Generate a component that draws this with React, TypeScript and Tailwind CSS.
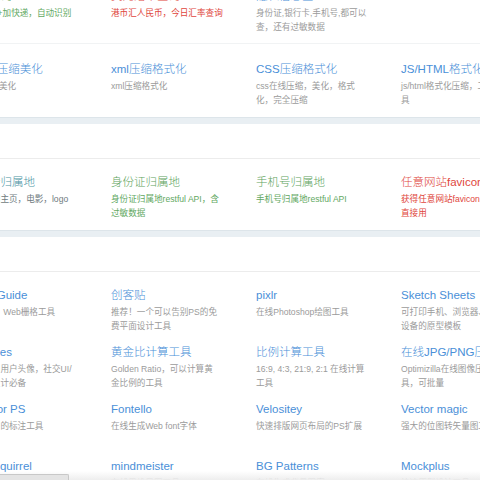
type Tone = "blue" | "green" | "red" | "teal";

type Tool = {
  title: string;
  desc?: string[];
  tone?: Tone;
};

const titleTone: Record<Tone, string> = {
  blue: "text-[#4a8fd8]",
  green: "text-[#5ea45e]",
  red: "text-[#e0463c]",
  teal: "text-[#4a93a3]",
};

const descTone: Record<Tone, string> = {
  blue: "text-[#9b9b9b]",
  green: "text-[#62a862]",
  red: "text-[#e0463c]",
  teal: "text-[#6f7b80]",
};

function ToolItem({ tool, pad }: { tool: Tool; pad: string }) {
  const tone = tool.tone ?? "blue";
  return (
    <div className={`${pad} whitespace-nowrap`}>
      <div className={`text-[11.5px] leading-[16px] font-light ${titleTone[tone]}`}>{tool.title}</div>
      {tool.desc && (
        <div className={`mt-[2px] text-[8.6px] leading-[14px] ${descTone[tone]}`}>
          {tool.desc.map((line) => (
            <div key={line}>{line}</div>
          ))}
        </div>
      )}
    </div>
  );
}

function Row({ tools, pad, border }: { tools: Tool[]; pad: string; border?: boolean }) {
  return (
    <div className={`grid grid-cols-4 ${border ? "border-b border-[#f1f3f4]" : ""}`}>
      {tools.map((t, i) => (
        <ToolItem key={i} tool={t} pad={pad} />
      ))}
    </div>
  );
}

function Band() {
  return <div className="h-[7px] border-t border-[#dde5ea] bg-[#e9eff3]" />;
}

const cardOne: Tool[][] = [
  [
    { title: "快递查询", desc: ["支持100+加快递，自动识别"], tone: "green" },
    { title: "美元港币查询", desc: ["港币汇人民币，今日汇率查询"], tone: "red" },
    { title: "隐私信息查", desc: ["身份证,银行卡,手机号,都可以", "查，还有过敏数据"] },
    { title: "" },
  ],
  [
    { title: "JSON压缩美化", desc: ["json压缩美化"] },
    { title: "xml压缩格式化", desc: ["xml压缩格式化"] },
    { title: "CSS压缩格式化", desc: ["css在线压缩，美化，格式", "化，完全压缩"] },
    { title: "JS/HTML格式化", desc: ["js/html格式化压缩，工", "具"] },
  ],
];

const cardTwo: Tool[] = [
  { title: "银行卡归属地", desc: ["银行官网主页，电影，logo"], tone: "teal" },
  { title: "身份证归属地", desc: ["身份证归属地restful API，含", "过敏数据"], tone: "green" },
  { title: "手机号归属地", desc: ["手机号归属地restful API"], tone: "green" },
  { title: "任意网站favicon", desc: ["获得任意网站favicon，", "直接用"], tone: "red" },
];

const cardThree: Tool[][] = [
  [
    { title: "GuideGuide", desc: ["PS插件，Web栅格工具"] },
    { title: "创客贴", desc: ["推荐！一个可以告别PS的免", "费平面设计工具"] },
    { title: "pixlr", desc: ["在线Photoshop绘图工具"] },
    { title: "Sketch Sheets", desc: ["可打印手机、浏览器、平板", "设备的原型模板"] },
  ],
  [
    { title: "UI Faces", desc: ["免费可用用户头像，社交UI/", "网页UI设计必备"] },
    { title: "黄金比计算工具", desc: ["Golden Ratio，可以计算黄", "金比例的工具"] },
    { title: "比例计算工具", desc: ["16:9, 4:3, 21:9, 2:1 在线计算", "工具"] },
    { title: "在线JPG/PNG压缩", desc: ["Optimizilla在线图像压缩工", "具，可批量"] },
  ],
  [
    { title: "Assistor PS", desc: ["超级好用的标注工具"] },
    { title: "Fontello", desc: ["在线生成Web font字体"] },
    { title: "Velositey", desc: ["快速排版网页布局的PS扩展"] },
    { title: "Vector magic", desc: ["强大的位图转矢量图工具"] },
  ],
  [
    { title: "Font Squirrel", desc: ["免费商用字体下载"] },
    { title: "mindmeister", desc: ["在线思维导图工具"] },
    { title: "BG Patterns", desc: ["在线生成背景图案"] },
    { title: "Mockplus", desc: ["快速原型设计工具"] },
  ],
];

export default function App() {
  return (
    <div
      className="relative h-[480px] w-[480px] overflow-hidden bg-white"
      style={{ fontFamily: '"Liberation Sans", "Noto Sans CJK SC", sans-serif' }}
    >
      <div className="-mt-[29px] -ml-[34px] w-[580px]">
        {/* card one */}
        <div className="bg-white">
          <Row tools={cardOne[0]} pad="pt-[17px] pb-[9px]" border />
          <Row tools={cardOne[1]} pad="pt-[17px] pb-[10px]" />
        </div>
        <Band />

        {/* card two */}
        <div className="bg-white">
          <div className="h-[35px] border-b border-[#ececec]" />
          <Row tools={cardTwo} pad="pt-[15px] pb-[10px]" />
        </div>
        <Band />

        {/* card three */}
        <div className="bg-white">
          <div className="h-[35px] border-b border-[#ececec]" />
          {cardThree.map((r, i) => (
            <Row key={i} tools={r} pad="h-[57px] pt-[15px]" />
          ))}
        </div>
      </div>

      {/* bottom fade + status box */}
      <div className="absolute bottom-0 left-0 right-0 h-[9px] bg-gradient-to-b from-white/0 to-[#eeeeee]" />
      <div className="absolute bottom-0 left-0 h-[6px] w-[69px] rounded-tr-[2px] border-t border-r border-[#c8c8c8] bg-[#e4e4e4]" />
    </div>
  );
}
